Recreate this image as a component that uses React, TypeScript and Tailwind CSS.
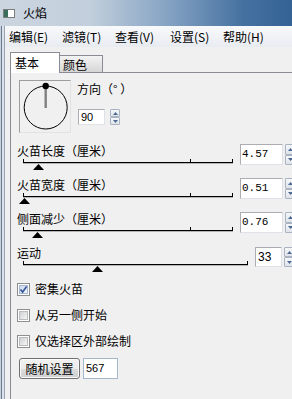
import React from 'react';

const cjk = "font-['Noto_Sans_CJK_SC','Liberation_Sans',sans-serif]";

const Arrow = ({ up }: { up?: boolean }) => (
  <svg width="5" height="3" viewBox="0 0 5 3">
    <path d={up ? 'M0 3L2.5 0L5 3Z' : 'M0 0L2.5 3L5 0Z'} fill="#4d6a93" />
  </svg>
);

const Spin = ({ className }: { className: string }) => (
  <div className={`flex w-[10px] flex-col ${className}`}>
    <div className="flex flex-1 items-center justify-center rounded-[1px] border border-[#a9b3c1] bg-gradient-to-b from-[#f6f7f9] to-[#dfe4ea]">
      <Arrow up />
    </div>
    <div className="flex flex-1 items-center justify-center rounded-[1px] border border-[#a9b3c1] bg-gradient-to-b from-[#f6f7f9] to-[#dfe4ea]">
      <Arrow />
    </div>
  </div>
);

type SliderRow = {
  label: string;
  value: string;
  thumb: number;
  ticks: number[];
  wide?: boolean;
};

const rows: SliderRow[] = [
  { label: '火苗长度（厘米）', value: '4.57', thumb: 15.5, ticks: [0, 167, 209] },
  { label: '火苗宽度（厘米）', value: '0.51', thumb: 1, ticks: [0, 167, 209] },
  { label: '侧面减少（厘米）', value: '0.76', thumb: 14, ticks: [0, 167, 209] },
  { label: '运动', value: '33', thumb: 74.5, ticks: [0, 224], wide: true },
];

const Track = ({ row }: { row: SliderRow }) => (
  <div className={`relative ml-[6px] mt-[3px] h-[10px] border-t border-black ${row.wide ? 'w-[225px]' : 'w-[210px]'}`}>
    <div className="h-[1px] w-full bg-[#b4b4b4]" />
    {row.ticks.map((t) => (
      <div key={t} className="absolute -top-[4px] h-[4px] w-[1px] bg-black" style={{ left: t }} />
    ))}
    <svg className="absolute top-[1px]" style={{ left: row.thumb - 5.5 }} width="11" height="6" viewBox="0 0 11 6">
      <path d="M0 6L5.5 0L11 6Z" fill="#000" />
    </svg>
  </div>
);

const Check = ({ label, checked }: { label: string; checked?: boolean }) => (
  <div className="flex h-[26px] items-center">
    <div className="h-[13px] w-[13px] border border-[#8e8f8f] bg-white p-[1px]">
      <div
        className={`relative h-full w-full border ${
          checked ? 'border-[#a9b9d4] bg-gradient-to-br from-[#cbd7ea] to-[#f4f7fb]' : 'border-[#bcbcbc] bg-gradient-to-br from-[#cfd1d4] to-[#f6f6f6]'
        }`}
      >
        {checked && (
          <svg className="absolute -left-[1px] -top-[1px]" width="9" height="9" viewBox="0 0 9 9">
            <path d="M1.5 4.5L3.6 7L7.6 1.5" stroke="#3b5a9a" strokeWidth="1.7" fill="none" />
          </svg>
        )}
      </div>
    </div>
    <span className="ml-[5px] leading-[16px]">{label}</span>
  </div>
);

export default function App() {
  return (
    <div className={`h-[399px] w-[292px] overflow-hidden bg-[#f0f0f0] text-[12px] text-black ${cjk}`}>
      <div className="w-[320px]">
        {/* title bar */}
        <div className="flex h-[26px] items-center bg-[linear-gradient(90deg,#cbd5e0_0%,#c2cfdc_28%,#86a4c4_52%,#4571a0_76%,#2b5a8f_100%)] pl-[3px]">
          <div className="flex h-[9px] w-[12px] border border-[#7c7c7c]">
            <div className="w-[4px] bg-[#3b6f5b]" />
            <div className="flex-1 bg-white" />
          </div>
          <span className="ml-[8px] leading-[16px]">火焰</span>
        </div>

        <div className="flex h-[373px]">
          <div className="w-[1px] bg-[#c9d3dd]" />
          <div className="w-[1px] bg-[#6b7a8c]" />
          <div className="w-[2px] bg-[#d9e2ea]" />
          <div className="flex flex-1 flex-col border-l border-[#9aa5b1]">
            {/* menu bar */}
            <div className="flex h-[21px] items-center bg-gradient-to-b from-[#f8f9fb] to-[#e8ecf1] pl-[4px]">
              <span className="w-[53px]">编辑(E)</span>
              <span className="w-[53px]">滤镜(T)</span>
              <span className="w-[55px]">查看(V)</span>
              <span className="w-[53px]">设置(S)</span>
              <span className="w-[53px]">帮助(H)</span>
            </div>

            {/* tabs */}
            <div className="flex h-[25px] items-end pl-[5px]">
              <div className="relative z-10 -mb-[1px] h-[21px] w-[50px] border border-b-0 border-[#898c95] bg-white pl-[4px] pt-[2px] leading-[16px]">
                基本
              </div>
              <div className="h-[17px] w-[43px] border-r border-t border-[#898c95] bg-gradient-to-b from-[#f3f3f3] to-[#d6d6d6] pl-[3px] pt-[1px] leading-[15px]">
                颜色
              </div>
            </div>

            {/* panel */}
            <div className="ml-[5px] flex-1 border-l border-t border-[#898c95] pl-[6px] pt-[7px]">
              <div className="flex">
                <div className="ml-[2px] h-[53px] w-[52px] border border-[#9d9d9d] border-b-[#e2e2e2] border-r-[#e2e2e2]">
                  <svg width="50" height="51" viewBox="0 0 50 51">
                    <circle cx="25.7" cy="26.5" r="21.5" stroke="#000" strokeWidth="1" fill="none" />
                    <line x1="25.7" y1="5" x2="25.7" y2="27" stroke="#808080" strokeWidth="2.4" />
                    <circle cx="25.7" cy="5" r="3.2" fill="#000" />
                  </svg>
                </div>
                <div className="ml-[6px] flex flex-col pt-[1px]">
                  <div className="leading-[16px]">方向（° ）</div>
                  <div className="mt-[12px] flex">
                    <div className="ml-[1px] flex h-[16px] w-[27px] items-center border border-[#abadb3] border-b-[#dfe3e8] border-r-[#dfe3e8] bg-white pl-[2px] font-['Liberation_Sans',sans-serif] text-[11px]">
                      90
                    </div>
                    <Spin className="ml-[5px] h-[16px]" />
                  </div>
                </div>
              </div>

              <div className="mt-[10px] flex flex-col">
                {rows.map((row) => (
                  <div key={row.label} className={`flex ${row.wide ? 'h-[31px]' : 'h-[34px]'}`}>
                    <div className="flex flex-col">
                      <div className="h-[16px] leading-[16px]">{row.label}</div>
                      <Track row={row} />
                    </div>
                    {row.wide ? (
                      <div className="ml-[7px] mt-[2px] flex">
                        <div className="flex h-[20px] w-[27px] items-center border border-[#abadb3] border-b-[#dfe3e8] border-r-[#dfe3e8] bg-white pl-[2px] font-['Liberation_Sans',sans-serif] text-[12px]">
                          {row.value}
                        </div>
                        <Spin className="ml-[2px] h-[20px]" />
                      </div>
                    ) : (
                      <div className="ml-[7px] mt-[1px] flex">
                        <div className="flex h-[21px] w-[43px] items-center border border-[#abadb3] border-b-[#dfe3e8] border-r-[#dfe3e8] bg-white pl-[1px] font-['Liberation_Mono',monospace] text-[11px]">
                          {row.value}
                        </div>
                        <Spin className="ml-[2px] h-[21px]" />
                      </div>
                    )}
                  </div>
                ))}
              </div>

              <Check label="密集火苗" checked />
              <Check label="从另一侧开始" />
              <Check label="仅选择区外部绘制" />

              <div className="mt-[4px] flex">
                <div className="ml-[2px] flex h-[21px] w-[61px] items-center justify-center rounded-[3px] border border-[#707070] bg-[linear-gradient(#f2f2f2_0%,#ebebeb_50%,#dddddd_50%,#cfcfcf_100%)] leading-[16px] shadow-[inset_0_0_0_1px_#fbfbfb]">
                  随机设置
                </div>
                <div className="ml-[3px] flex h-[21px] w-[35px] items-center border border-[#a5b7ca] bg-white pl-[2px] font-['Liberation_Sans',sans-serif] text-[11px]">
                  567
                </div>
              </div>
            </div>
          </div>
        </div>
      </div>
    </div>
  );
}
